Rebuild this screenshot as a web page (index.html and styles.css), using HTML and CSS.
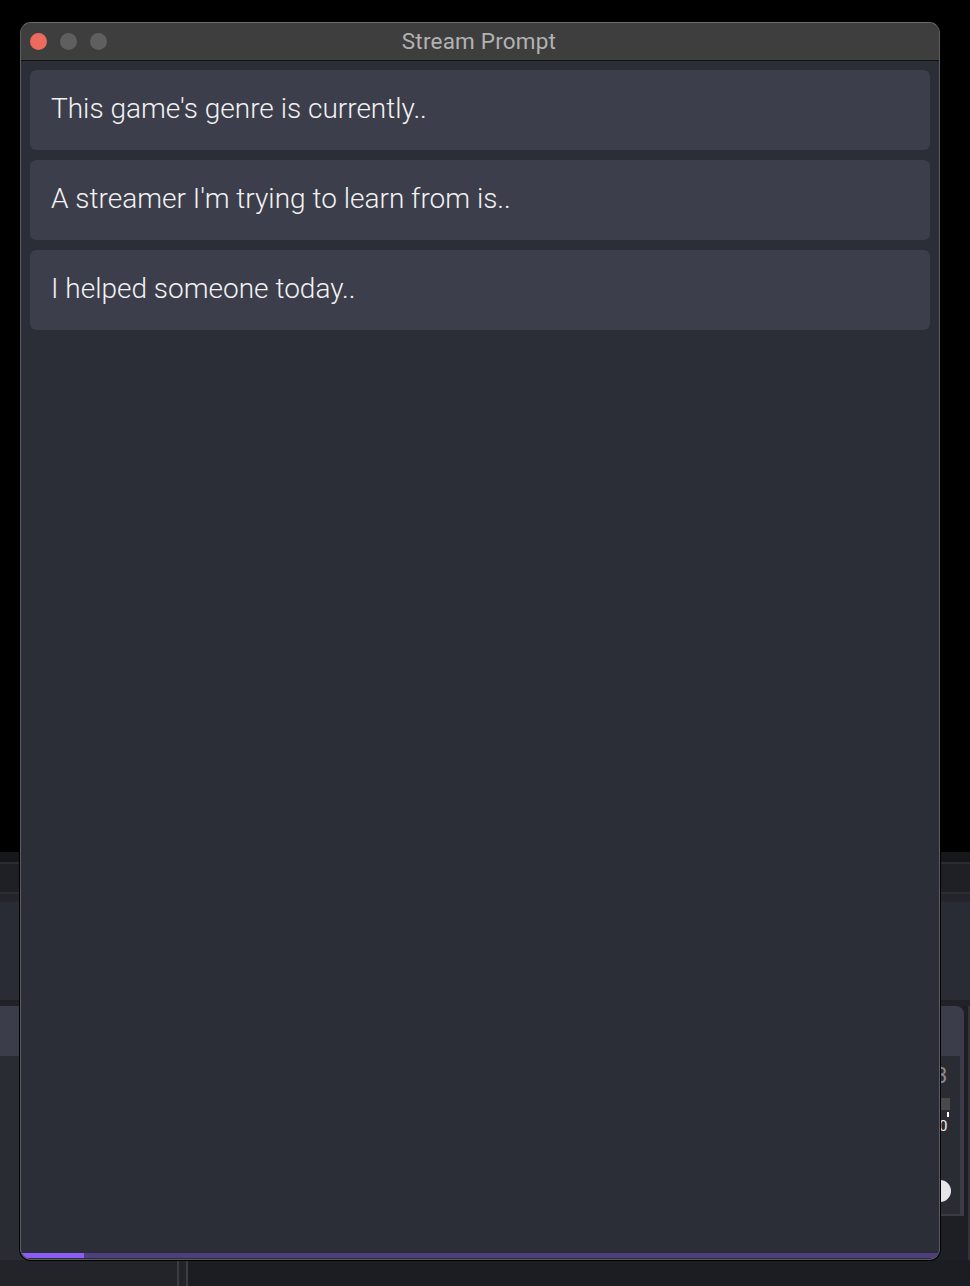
FILE: index.html
```html
<!DOCTYPE html>
<html>
<head>
<meta charset="utf-8">
<link rel="stylesheet" href="styles.css">
</head>
<body>
<div class="desktop">
  <div class="backapp">
    <div class="band b1"></div>
    <div class="band b2"></div>
    <div class="band b3"></div>
    <div class="band b4"></div>
    <div class="band b5"></div>
    <div class="band b6"></div>
    <div class="panels">
      <div class="lpanel">
        <div class="lcard"></div>
        <div class="lbody"></div>
      </div>
      <div class="mid"></div>
      <div class="rpanel">
        <div class="rcard">
          <div class="rhead"></div>
          <div class="rbody">
            <div class="rnum">3</div>
            <div class="rmeter"></div>
            <div class="rtick"></div>
            <div class="rzero">0</div>
            <div class="rknob"></div>
          </div>
        </div>
        <div class="rfoot"></div>
      </div>
    </div>
    <div class="foot">
      <div class="fseg1"></div>
      <div class="fline"></div>
      <div class="fseg2"></div>
      <div class="fline"></div>
      <div class="fseg3"></div>
    </div>
  </div>

  <div class="window">
    <div class="titlebar">
      <div class="lights">
        <span class="light red"></span>
        <span class="light"></span>
        <span class="light"></span>
      </div>
      <div class="title">Stream Prompt</div>
    </div>
    <div class="content">
      <div class="card">This game's genre is currently..</div>
      <div class="card">A streamer I'm trying to learn from is..</div>
      <div class="card">I helped someone today..</div>
    </div>
    <div class="progress">
      <div class="progress-fill"></div>
    </div>
  </div>
</div>
</body>
</html>
```

FILE: styles.css
```css
* { box-sizing: border-box; }
html, body { margin: 0; padding: 0; background: #000; }
body { font-family: Roboto, "Noto Sans", "Liberation Sans", sans-serif; }

.desktop {
  position: relative;
  width: 970px;
  height: 1286px;
  overflow: hidden;
  background: #000;
}

/* background app, partially hidden behind the window */
.backapp {
  position: absolute;
  left: 0;
  top: 852px;
  width: 970px;
  height: 434px;
  display: flex;
  flex-direction: column;
}
.band { flex: none; }
.b1 { height: 10px; background: #16171b; }
.b2 { height: 2px; background: #2b2c32; }
.b3 { height: 28px; background: #1f2025; }
.b4 { height: 2px; background: #2c2d33; }
.b5 { height: 106px; background: linear-gradient(#24252b 0 8px, #2a2c35 8px); }
.b6 { height: 6px; background: #212228; }

.panels {
  flex: 1;
  display: flex;
  background: #26272e;
}
.lpanel { width: 30px; display: flex; flex-direction: column; }
.lcard { height: 50px; background: #3b3d4a; }
.lbody { flex: 1; background: #2a2c34; }
.mid { flex: 1; }
.rpanel { width: 60px; display: flex; flex-direction: column; background: #1e1f24; border-right: 2px solid #33343b; }
.rcard {
  height: 210px;
  margin-right: 4px;
  background: #3b3d4a;
  border-radius: 0 8px 0 0;
  display: flex;
  flex-direction: column;
}
.rhead { height: 50px; }
.rbody {
  flex: 1;
  background: #2a2c34;
  margin-right: 4px;
  position: relative;
  border-bottom: 2px solid #3a3b43;
}
.rnum { position: absolute; left: 25px; top: 8px; font-size: 22px; color: #8b8b8f; line-height: 24px; }
.rmeter { position: absolute; left: 28px; top: 42px; width: 12px; height: 12px; background: #4a4a4c; }
.rtick { position: absolute; left: 37px; top: 56px; width: 2px; height: 5px; background: #fff; }
.rzero { position: absolute; left: 29px; top: 62px; font-size: 15px; color: #eee; line-height: 16px; }
.rknob { position: absolute; left: 19px; top: 124px; width: 22px; height: 22px; border-radius: 50%; background: #e6e6e6; }
.rfoot { flex: 1; }

.foot {
  height: 26px;
  flex: none;
  display: flex;
  background: #1c1d22;
}
.fseg1 { width: 177px; background: #23242a; }
.fline { width: 2px; background: #3a3b43; }
.fseg2 { width: 7px; background: #23242a; }
.fseg3 { flex: 1; }

/* the window */
.window {
  position: absolute;
  left: 20px;
  top: 22px;
  width: 920px;
  height: 1238px;
  border: 1px solid #5c5d64;
  border-top-color: #6e6e6e;
  border-radius: 11px;
  box-shadow: 0 0 0 1px #000;
  overflow: hidden;
  display: flex;
  flex-direction: column;
  background: #2b2d37;
}
.titlebar {
  flex: none;
  height: 38px;
  background: #3e3e3e;
  border-bottom: 1px solid #111214;
  position: relative;
  display: flex;
  align-items: center;
  justify-content: center;
}
.lights {
  position: absolute;
  left: 9px;
  top: 10px;
  display: flex;
  gap: 13px;
}
.light {
  width: 17px;
  height: 17px;
  border-radius: 50%;
  background: #5f5f5f;
}
.light.red { background: #ec6a5e; }
.title {
  font-size: 22.5px;
  color: #b2b2b2;
  letter-spacing: 0.2px;
  padding-bottom: 2px;
  padding-right: 2px;
}

.content {
  flex: 1;
  padding: 9px 9px 8px;
  display: flex;
  flex-direction: column;
  gap: 10px;
}
.card {
  height: 80px;
  background: #3c3e4b;
  border-radius: 6px;
  padding: 0 21px 4px;
  display: flex;
  align-items: center;
  font-size: 28px;
  font-weight: 300;
  color: #f2f2f2;
}

.progress {
  flex: none;
  height: 5px;
  margin-bottom: 1px;
  background: #4f3f7d;
}
.progress-fill {
  width: 63px;
  height: 100%;
  background: #8b5cf6;
}
```
